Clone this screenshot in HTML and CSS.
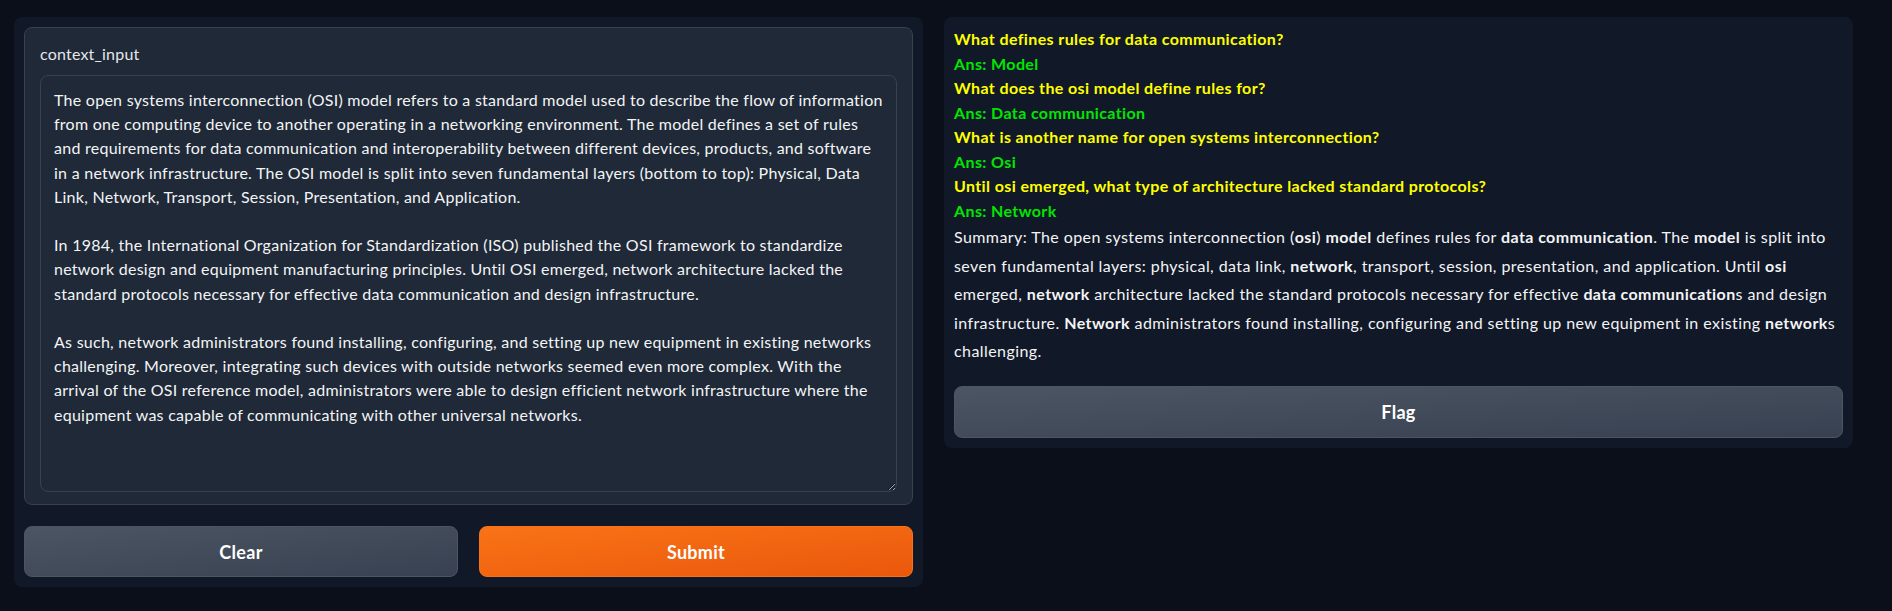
FILE: index.html
```html
<!DOCTYPE html>
<html lang="en">
<head>
<meta charset="utf-8">
<title>OSI QA</title>
<link rel="stylesheet" href="styles.css">
</head>
<body>
<div class="app">
  <div class="column">
    <div class="form-block">
      <label class="field-label" for="ctx">context_input</label>
      <textarea id="ctx" class="field-input">The open systems interconnection (OSI) model refers to a standard model used to describe the flow of information from one computing device to another operating in a networking environment. The model defines a set of rules and requirements for data communication and interoperability between different devices, products, and software in a network infrastructure. The OSI model is split into seven fundamental layers (bottom to top): Physical, Data Link, Network, Transport, Session, Presentation, and Application.

In 1984, the International Organization for Standardization (ISO) published the OSI framework to standardize network design and equipment manufacturing principles. Until OSI emerged, network architecture lacked the standard protocols necessary for effective data communication and design infrastructure.

As such, network administrators found installing, configuring, and setting up new equipment in existing networks challenging. Moreover, integrating such devices with outside networks seemed even more complex. With the arrival of the OSI reference model, administrators were able to design efficient network infrastructure where the equipment was capable of communicating with other universal networks.</textarea>
    </div>
    <div class="btn-row">
      <button class="btn btn-secondary">Clear</button>
      <button class="btn btn-primary">Submit</button>
    </div>
  </div>
  <div class="column column-right">
    <div class="output">
      <div class="q">What defines rules for data communication?</div>
      <div class="a">Ans: Model</div>
      <div class="q">What does the osi model define rules for?</div>
      <div class="a">Ans: Data communication</div>
      <div class="q">What is another name for open systems interconnection?</div>
      <div class="a">Ans: Osi</div>
      <div class="q">Until osi emerged, what type of architecture lacked standard protocols?</div>
      <div class="a">Ans: Network</div>
      <p class="summary">Summary: The open systems interconnection (<b>osi</b>) <b>model</b> defines rules for <b>data communication</b>. The <b>model</b> is split into seven fundamental layers: physical, data link, <b>network</b>, transport, session, presentation, and application. Until <b>osi</b> emerged, <b>network</b> architecture lacked the standard protocols necessary for effective <b>data communication</b>s and design infrastructure. <b>Network</b> administrators found installing, configuring and setting up new equipment in existing <b>network</b>s challenging.</p>
    </div>
    <button class="btn btn-secondary btn-flag">Flag</button>
  </div>
</div>
</body>
</html>
```
FILE: styles.css
```css
* { box-sizing: border-box; }
html, body {
  margin: 0;
  background: #0b0f19;
  font-family: Lato, "Noto Sans", sans-serif;
  color: #f3f4f6;
}
.app {
  display: flex;
  gap: 21px;
  padding: 17px 39px 0 14px;
  align-items: flex-start;
}
.column {
  flex: 1 1 0;
  min-width: 0;
  background: #111827;
  border-radius: 8px;
  padding: 10px;
  display: flex;
  flex-direction: column;
  gap: 21px;
}
.column-right { gap: 20px; }
.form-block {
  background: #1f2937;
  border: 1px solid #374151;
  border-radius: 8px;
  padding: 16px 15px 12px 15px;
  display: flex;
  flex-direction: column;
  gap: 11px;
}
.field-label {
  font-size: 16px;
  line-height: 20px;
  letter-spacing: 0.2px;
  color: #e5e7eb;
}
.field-input {
  display: block;
  width: 100%;
  height: 417px;
  background: #1f2937;
  border: 1px solid #374151;
  border-radius: 8px;
  color: #f3f4f6;
  font-family: Lato, "Noto Sans", sans-serif;
  font-size: 16px;
  letter-spacing: 0.26px;
  line-height: 24.2px;
  padding: 12px 13px;
  outline: none;
  resize: vertical;
}
.btn-row {
  display: flex;
  gap: 21px;
}
.btn {
  flex: 1 1 0;
  height: 51px;
  border-radius: 8px;
  font-family: Lato, "Noto Sans", sans-serif;
  font-size: 18px;
  font-weight: 700;
  letter-spacing: 0.3px;
  color: #ffffff;
  cursor: pointer;
}
.btn-secondary {
  background: linear-gradient(to bottom right, #4b5563, #374151);
  border: 1px solid #4b5563;
}
.btn-primary {
  background: linear-gradient(to bottom right, #f97316, #ea580c);
  border: 1px solid #f97316;
}
.btn-flag { flex: none; width: 100%; height: 52px; }
.output {
  font-size: 16px;
}
.q, .a {
  font-weight: 700;
  line-height: 24.5px;
  letter-spacing: 0.38px;
}
.q { color: #ffff00; }
.a { color: #00e600; }
.summary {
  margin: 0;
  line-height: 28.6px;
  letter-spacing: 0.42px;
  color: #f3f4f6;
}
.summary b { font-weight: 700; }
```
